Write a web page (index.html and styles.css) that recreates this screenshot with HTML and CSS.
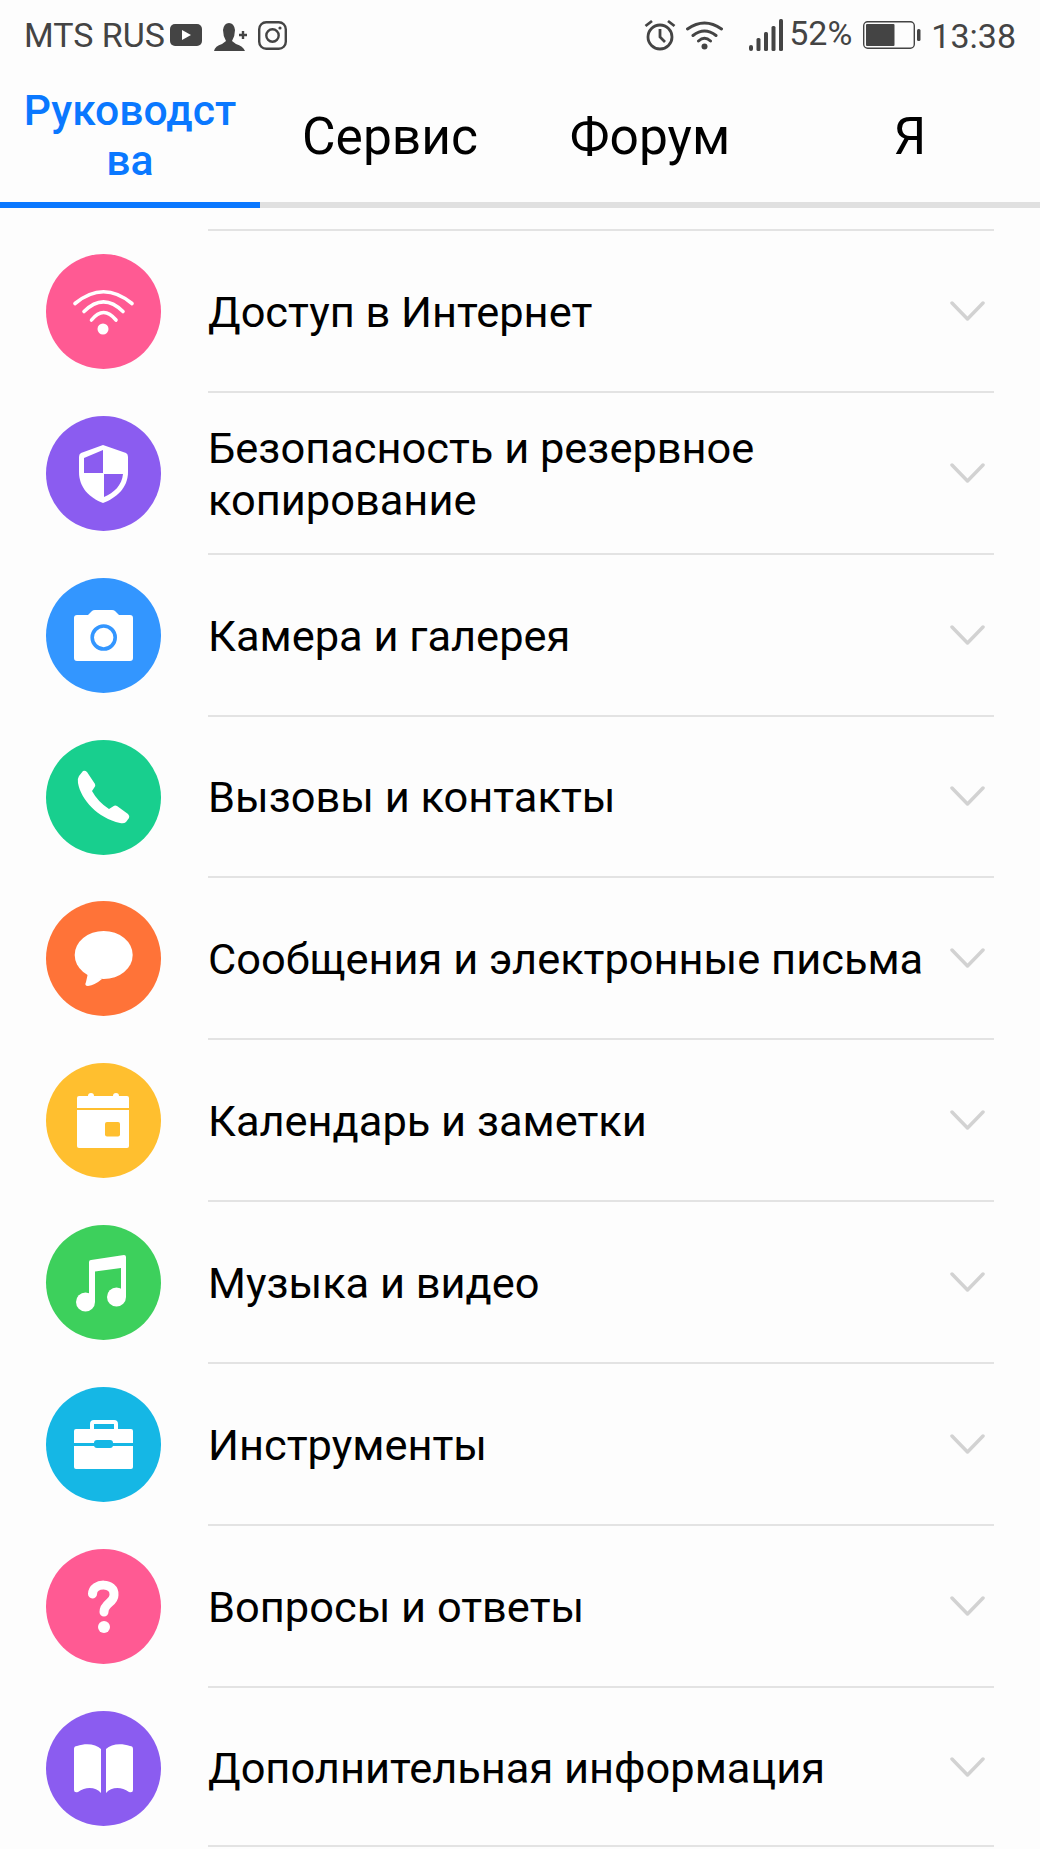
FILE: index.html
```html
<!DOCTYPE html>
<html lang="ru">
<head>
    <meta charset="UTF-8">
    <meta name="viewport" content="width=device-width, initial-scale=1.0">
    <title>Руководства</title>
    <link rel="stylesheet" href="styles.css">
</head>
<body>
    <div class="status">
        <div class="status-side">
            <span class="carrier">MTS RUS</span>
            <svg class="ic-yt" width="32" height="22" viewBox="0 0 32 22"><rect width="32" height="22" rx="5" fill="#444"/><path d="M12 6 L21 11 L12 16 Z" fill="#fff"/></svg>
            <svg class="ic-user" width="33" height="30" viewBox="0 0 33 30"><path d="M0 29 Q1 24 8 22 L12 19 Q9 14 9 8 Q10 1 15 1 Q20 1 21 8 Q21 14 18 19 L22 22 Q29 24 31 29 Z" fill="#444"/><path d="M25 13 H33 M29 9 V17" stroke="#444" stroke-width="2.4"/></svg>
            <svg class="ic-insta" width="29" height="29" viewBox="0 0 29 29" fill="none" stroke="#444" stroke-width="2.4"><rect x="1.2" y="1.2" width="26.6" height="26.6" rx="7"/><circle cx="14.5" cy="14.5" r="6.2"/><circle cx="22" cy="7" r="1.6" fill="#444" stroke="none"/></svg>
        </div>
        <div class="status-side">
            <svg class="ic-alarm" width="32" height="32" viewBox="0 0 32 32" fill="none" stroke="#444" stroke-width="2.8"><circle cx="16" cy="18" r="12"/><path d="M16 10 V18 L21 23 M1.5 7 L8 2 M30.5 7 L24 2"/></svg>
            <svg class="ic-wifi" width="37" height="30" viewBox="0 0 37 30" fill="none" stroke="#444" stroke-width="3" stroke-linecap="round"><path d="M1.5 9 Q18.5 -3 35.5 9 M7 15.5 Q18.5 6.5 30 15.5 M12.5 21 Q18.500 15.500 24.500 21"/><circle cx="18.500" cy="26.500" r="3" fill="#444" stroke="none"/></svg>
            <svg class="ic-signal" width="34" height="32" viewBox="0 0 34 32" fill="#444"><rect x="0" y="26" width="4" height="6" rx="2"/><rect x="7.500" y="19" width="4" height="13" rx="1.500"/><rect x="15" y="13" width="4" height="19" rx="1.500"/><rect x="22.500" y="7" width="4" height="25" rx="1.500"/><rect x="30" y="0" width="4" height="32" rx="1.500"/></svg>
            <span class="percent">52%</span>
            <svg class="ic-battery" width="58" height="28" viewBox="0 0 58 28"><rect x="0.700" y="0.700" width="50.600" height="26.600" rx="4" fill="none" stroke="#444" stroke-width="1.400"/><rect x="3" y="3" width="28.500" height="22" rx="1" fill="#444"/><rect x="54" y="8" width="3.500" height="12" rx="1.500" fill="#444"/></svg>
            <span class="clock">13:38</span>
        </div>
    </div>

    <div class="tabs">
        <div class="tab active">Руководства</div>
        <div class="tab">Сервис</div>
        <div class="tab">Форум</div>
        <div class="tab">Я</div>
    </div>

    <div class="list">
        <div class="row">
            <div class="badge pink">
                <svg viewBox="0 0 115 115"><g fill="none" stroke="#fff" stroke-width="3.600" stroke-linecap="round"><path d="M29 49.500 Q57.500 26 86 49.500"/><path d="M38 57.500 Q57.500 38 77 57.500"/><path d="M45.500 66 Q57.500 51 70 66"/></g><circle cx="57" cy="75" r="5.500" fill="#fff"/></svg>
            </div>
            <div class="row-body"><span class="label">Доступ в Интернет</span><svg class="chev" viewBox="0 0 35 20"><path d="M2 2 L17.500 18 L33 2"/></svg></div>
        </div>
        <div class="row">
            <div class="badge purple">
                <svg viewBox="0 0 115 115"><path d="M57 29 L80 37 Q82 38 82 41 V56 C82 72 70 82 57 87 C44 82 33 72 33 56 V41 Q33 38 35 37 Z" fill="#fff"/><path d="M38 42 L57 34 V57 H38 Z M58 58 H77 C76 69 68 77 58 81 Z" fill="#8b5cf0"/></svg>
            </div>
            <div class="row-body"><span class="label">Безопасность и резервное копирование</span><svg class="chev" viewBox="0 0 35 20"><path d="M2 2 L17.500 18 L33 2"/></svg></div>
        </div>
        <div class="row">
            <div class="badge blue">
                <svg viewBox="0 0 115 115"><path d="M28 40 Q28 37 31 37 H42 L46 33 Q47 32 49 32 H66 Q68 32 69 33 L73 37 H84 Q87 37 87 40 V80 Q87 83 84 83 H31 Q28 83 28 80 Z" fill="#fff"/><circle cx="57.700" cy="59.500" r="11.500" fill="none" stroke="#3396ff" stroke-width="3.600"/></svg>
            </div>
            <div class="row-body"><span class="label">Камера и галерея</span><svg class="chev" viewBox="0 0 35 20"><path d="M2 2 L17.500 18 L33 2"/></svg></div>
        </div>
        <div class="row">
            <div class="badge green">
                <svg viewBox="0 0 115 115"><path d="M37 31 Q39 30 41 32 L49 44 Q50 46 48 48 L46 51 Q52 62 63 69 L67 66.500 Q69 65 71 66 L82 74 Q84 76 83 78 L80 82 Q78 84 74 83 C52 78 35 60 32 43 Q31 39 33 36 Z" fill="#fff"/></svg>
            </div>
            <div class="row-body"><span class="label">Вызовы и контакты</span><svg class="chev" viewBox="0 0 35 20"><path d="M2 2 L17.500 18 L33 2"/></svg></div>
        </div>
        <div class="row">
            <div class="badge orange">
                <svg viewBox="0 0 115 115"><ellipse cx="57.700" cy="54" rx="29" ry="24" fill="#fff"/><path d="M42 72 L40 81 Q38 85 42 85 Q49 84 56 78 Z" fill="#fff"/></svg>
            </div>
            <div class="row-body"><span class="label">Сообщения и электронные письма</span><svg class="chev" viewBox="0 0 35 20"><path d="M2 2 L17.500 18 L33 2"/></svg></div>
        </div>
        <div class="row">
            <div class="badge yellow">
                <svg viewBox="0 0 115 115"><path d="M31 45 V35 Q31 33 33 33 H42 Q42 30 45 30 Q48 30 48 33 H67 Q67 30 70 30 Q73 30 73 33 H81 Q83 33 83 35 V45 Z" fill="#fff"/><path d="M31 47 H83 V83 Q83 85 81 85 H33 Q31 85 31 83 Z" fill="#fff"/><rect x="59" y="59" width="15" height="14.500" rx="2" fill="#ffbf2f"/></svg>
            </div>
            <div class="row-body"><span class="label">Календарь и заметки</span><svg class="chev" viewBox="0 0 35 20"><path d="M2 2 L17.500 18 L33 2"/></svg></div>
        </div>
        <div class="row">
            <div class="badge lime">
                <svg viewBox="0 0 115 115"><circle cx="39.500" cy="77" r="9.500" fill="#fff"/><circle cx="70.500" cy="72" r="9.500" fill="#fff"/><path d="M43 77 V37 Q43 35 45 35 L78 30 Q80 30 80 32 V72 H75 V43 L49 46.500 V77 Z" fill="#fff"/></svg>
            </div>
            <div class="row-body"><span class="label">Музыка и видео</span><svg class="chev" viewBox="0 0 35 20"><path d="M2 2 L17.500 18 L33 2"/></svg></div>
        </div>
        <div class="row">
            <div class="badge cyan">
                <svg viewBox="0 0 115 115"><path d="M46 42 V37 Q46 35 48 35 H68 Q70 35 70 37 V42" fill="none" stroke="#fff" stroke-width="4"/><path d="M28 44 Q28 42 30 42 H85 Q87 42 87 44 V56 H28 Z" fill="#fff"/><path d="M28 59 H87 V80 Q87 82 85 82 H30 Q28 82 28 80 Z" fill="#fff"/><rect x="48" y="53" width="19" height="8" rx="3" fill="#15b7e5"/></svg>
            </div>
            <div class="row-body"><span class="label">Инструменты</span><svg class="chev" viewBox="0 0 35 20"><path d="M2 2 L17.500 18 L33 2"/></svg></div>
        </div>
        <div class="row">
            <div class="badge pink">
                <svg viewBox="0 0 115 115"><path d="M46.500 45 C47 33 69 33 68 46 C68 54 58 54 58 63" fill="none" stroke="#fff" stroke-width="9" stroke-linecap="round"/><circle cx="58" cy="78" r="6" fill="#fff"/></svg>
            </div>
            <div class="row-body"><span class="label">Вопросы и ответы</span><svg class="chev" viewBox="0 0 35 20"><path d="M2 2 L17.500 18 L33 2"/></svg></div>
        </div>
        <div class="row">
            <div class="badge purple">
                <svg viewBox="0 0 115 115"><path d="M28 38 Q28 35 31 35 C40 32 50 33 55 38 V82 C50 76 40 75 32 81 Q28 82 28 79 Z" fill="#fff"/><path d="M87 38 Q87 35 84 35 C75 32 65 33 60 38 V82 C65 76 75 75 83 81 Q87 82 87 79 Z" fill="#fff"/></svg>
            </div>
            <div class="row-body"><span class="label">Дополнительная информация</span><svg class="chev" viewBox="0 0 35 20"><path d="M2 2 L17.500 18 L33 2"/></svg></div>
        </div>
    </div>
</body>
</html>
```

FILE: styles.css
```css
* {
    box-sizing: border-box;
}

body {
    margin: 0;
    width: 1040px;
    height: 1849px;
    overflow: hidden;
    background: #fdfdfd;
    font-family: Roboto, "Noto Sans", sans-serif;
    color: #000;
}

.status {
    display: flex;
    justify-content: space-between;
    align-items: center;
    height: 70px;
    padding: 0 24px 0 24px;
    color: #444;
    font-size: 34px;
}

.status-side {
    display: flex;
    align-items: center;
}

.ic-yt { margin-left: 5px; }
.ic-user { margin-left: 12px; margin-top: 3px; }
.ic-insta { margin-left: 11px; }
.ic-wifi { margin-left: 10px; }
.ic-signal { margin-left: 26px; }
.percent { margin-left: 6px; margin-top: -4px; }
.ic-battery { margin-left: 11px; }
.clock { margin-left: 10px; margin-top: 1px; }

.tabs {
    display: grid;
    grid-template-columns: repeat(4, 1fr);
    height: 138px;
    border-bottom: 6px solid #e0e0e0;
}

.tab {
    display: flex;
    align-items: center;
    justify-content: center;
    height: 138px;
    padding: 0 20px 6px;
    font-size: 51.5px;
    text-align: center;
}

.tab.active {
    margin-bottom: -6px;
    padding-bottom: 3px;
    border-bottom: 6px solid #0a78ff;
    color: #0a78ff;
    font-size: 42.7px;
    font-weight: 500;
    line-height: 50px;
    word-break: break-all;
}

.list {
    padding-top: 21px;
}

.row {
    display: flex;
    height: 161.85px;
}

.badge {
    flex: none;
    width: 115px;
    height: 115px;
    margin: 25px 47px 0 46px;
    border-radius: 50%;
}

.badge svg {
    display: block;
    width: 115px;
    height: 115px;
}

.pink { background: #ff5a93; }
.purple { background: #8b5cf0; }
.blue { background: #3396ff; }
.green { background: #18cf8e; }
.orange { background: #ff7338; }
.yellow { background: #ffbf2f; }
.lime { background: #3dd05c; }
.cyan { background: #15b7e5; }

.row-body {
    display: flex;
    align-items: center;
    justify-content: space-between;
    width: 786px;
    border-top: 2px solid #e3e3e3;
    margin-right: 46px;
}

.row:last-child .row-body {
    border-bottom: 2px solid #e3e3e3;
}

.label {
    max-width: 720px;
    padding-top: 4px;
    font-size: 43.4px;
    line-height: 52px;
}

.chev {
    flex: none;
    width: 35px;
    height: 20px;
    margin-right: 9px;
}

.chev path {
    fill: none;
    stroke: #d2d2d2;
    stroke-width: 3.5;
    stroke-linecap: round;
    stroke-linejoin: round;
}
```
